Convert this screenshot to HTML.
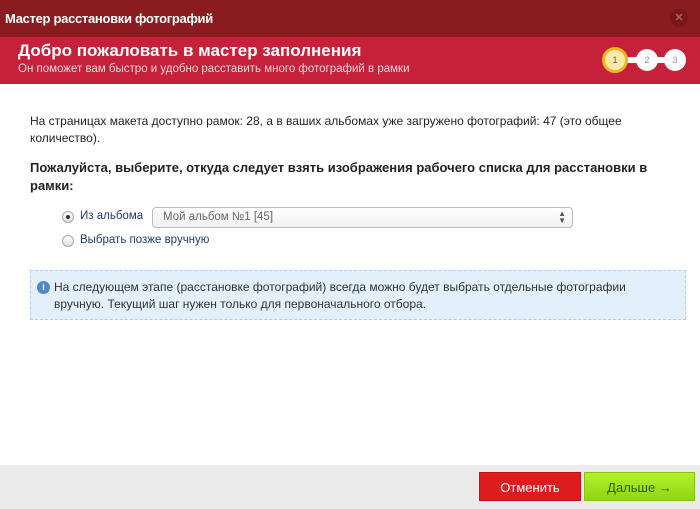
<!DOCTYPE html>
<html><head><meta charset="utf-8"><style>
*{margin:0;padding:0;box-sizing:border-box}
body{width:700px;height:509px;overflow:hidden;background:#fff;font-family:"Liberation Sans",sans-serif;position:relative}
.tb{position:absolute;left:0;top:0;width:700px;height:37px;background:#8a1c1f;color:#fff;font-size:13px;font-weight:bold;padding:11px 0 0 5px;letter-spacing:-0.3px}
.x{position:absolute;right:12px;top:9px;width:18px;height:18px;border-radius:50%;background:#7a1518;color:#b06060;font-size:11px;text-align:center;line-height:18px}
.hd{position:absolute;left:0;top:37px;width:700px;height:47px;background:#c5213a}
.h1{position:absolute;left:18px;top:4px;color:#fff;font-size:17px;font-weight:bold}
.h2{position:absolute;left:18px;top:26px;color:#f6d5da;font-size:11.5px}
.st{position:absolute;top:12px;width:22px;height:22px;border-radius:50%;background:#fff;font-size:9px;color:#999;text-align:center;line-height:22px}
.line{position:absolute;left:620px;top:20px;width:55px;height:6px;background:#fff}
.p{position:absolute;left:30px;font-size:12px;color:#222}
.b{font-weight:bold;font-size:13px}
.r{position:absolute;width:12px;height:12px;border-radius:50%;border:1px solid #aaa;background:linear-gradient(#fff,#ddd)}
.sel{position:absolute;left:152px;top:207px;width:421px;height:21px;border:1px solid #bbb;border-radius:4px;background:linear-gradient(#fff,#f0f0f0);font-size:11.5px;color:#666;padding:3px 0 0 10px}
.info{position:absolute;left:30px;top:270px;width:656px;height:50px;background:#e3effb;border:1px dashed #b8cbe0;font-size:12px;color:#333;padding:8px 40px 0 23px;line-height:17px}
.ft{position:absolute;left:0;top:465px;width:700px;height:44px;background:#ebebeb}
.btn{position:absolute;top:472px;height:29px;font-size:13px;text-align:center;line-height:29px}
</style></head><body>
<div class="tb">Мастер расстановки фотографий<div class="x">✕</div></div>
<div class="hd">
<div class="h1">Добро пожаловать в мастер заполнения</div>
<div class="h2">Он поможет вам быстро и удобно расставить много фотографий в рамки</div>
<div class="line"></div>
<div class="st" style="left:602px;top:10px;width:26px;height:26px;line-height:20px;background:#fbe9a8;border:3px solid #f0b324;color:#555">1</div>
<div class="st" style="left:636px">2</div>
<div class="st" style="left:664px">3</div>
</div>
<div class="p" style="top:113px;line-height:17px;width:640px">На страницах макета доступно рамок: 28, а в ваших альбомах уже загружено фотографий: 47 (это общее количество).</div>
<div class="p b" style="top:159px;line-height:18px;width:660px">Пожалуйста, выберите, откуда следует взять изображения рабочего списка для расстановки в рамки:</div>
<div class="r" style="left:62px;top:211px"><div style="width:4px;height:4px;border-radius:50%;background:#333;margin:3px"></div></div>
<div class="p" style="left:80px;top:210px;font-size:11.5px;color:#1f3a6a">Из альбома</div>
<div class="sel">Мой альбом №1 [45]<span style="position:absolute;right:6px;top:2px;font-size:8px;color:#555;line-height:7px">▲<br>▼</span></div>
<div class="r" style="left:62px;top:235px"></div>
<div class="p" style="left:80px;top:234px;font-size:11.5px;color:#1f3a6a">Выбрать позже вручную</div>
<div class="info"><div style="position:absolute;left:6px;top:10px;width:13px;height:13px;border-radius:50%;background:#4d86c9;color:#fff;font-size:9px;font-weight:bold;text-align:center;line-height:13px">i</div>На следующем этапе (расстановке фотографий) всегда можно будет выбрать отдельные фотографии вручную. Текущий шаг нужен только для первоначального отбора.</div>
<div class="ft"></div>
<div class="btn" style="left:479px;width:102px;background:#dd1c1f;border:1px solid #b51418;color:#fff">Отменить</div>
<div class="btn" style="left:584px;width:111px;background:linear-gradient(#b3f02b,#8fd613);border:1px solid #86c21a;color:#2d5a0c">Дальше →</div>
</body></html>
